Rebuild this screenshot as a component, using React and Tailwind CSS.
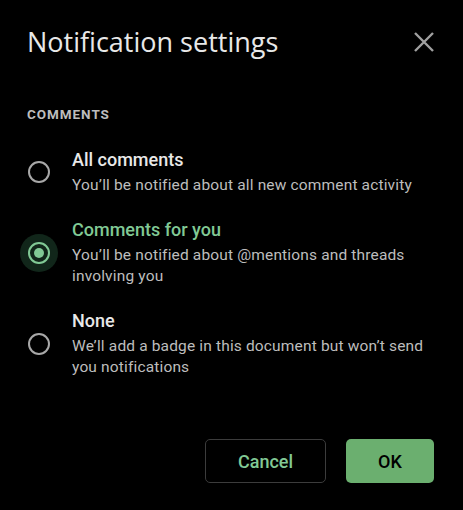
import { useState } from 'react';

const options = [
  {
    id: 'all',
    title: 'All comments',
    desc: 'You’ll be notified about all new comment activity',
  },
  {
    id: 'you',
    title: 'Comments for you',
    desc: 'You’ll be notified about @mentions and threads involving you',
  },
  {
    id: 'none',
    title: 'None',
    desc: 'We’ll add a badge in this document but won’t send you notifications',
  },
];

function Radio({ checked }) {
  return (
    <div
      className={`flex shrink-0 items-center justify-center w-[38px] h-[38px] rounded-full ${
        checked ? 'bg-[#11261a]' : ''
      }`}
    >
      <div
        className={`flex items-center justify-center w-[22px] h-[22px] rounded-full border-2 ${
          checked ? 'border-[#81c995]' : 'border-[#a8a8a8]'
        }`}
      >
        {checked && <div className="w-[10px] h-[10px] rounded-full bg-[#81c995]" />}
      </div>
    </div>
  );
}

export default function App() {
  const [value, setValue] = useState('you');

  return (
    <div
      className="w-[463px] h-[510px] bg-black flex flex-col"
      style={{ fontFamily: 'Roboto, "Noto Sans", sans-serif' }}
    >
      <div className="flex items-center justify-between pl-[27px] pr-[27px] pt-[22px]">
        <h1
          className="text-[27px] leading-[40px] text-[#e8e8e8]"
          style={{ fontFamily: '"Open Sans", Roboto, sans-serif' }}
        >
          Notification settings
        </h1>
        <button className="text-[#a0a0a0]">
          <svg width="24" height="24" viewBox="0 0 24 24" fill="none" stroke="currentColor" strokeWidth="2.4">
            <path d="M3 3 L21 21 M21 3 L3 21" />
          </svg>
        </button>
      </div>

      <div className="pl-[27px] mt-[44px] text-[13.5px] leading-[16px] font-bold tracking-[0.07em] text-[#bdbdbd]">
        COMMENTS
      </div>

      <div className="flex flex-col gap-[22px] pl-[20px] pr-[20px] mt-[26px]">
        {options.map((o) => {
          const checked = value === o.id;
          return (
            <div
              key={o.id}
              className="flex items-center gap-[14px] cursor-pointer"
              onClick={() => setValue(o.id)}
            >
              <Radio checked={checked} />
              <div className="flex flex-col">
                <div
                  className={`text-[18px] leading-[24px] font-medium ${
                    checked ? 'text-[#81c995]' : 'text-[#e8e8e8]'
                  }`}
                >
                  {o.title}
                </div>
                <div className="mt-[3px] text-[15.5px] leading-[21px] tracking-[0.01em] text-[#bdbdbd] max-w-[355px]">
                  {o.desc}
                </div>
              </div>
            </div>
          );
        })}
      </div>

      <div className="flex justify-end gap-[20px] pr-[29px] mt-auto mb-[27px]">
        <button className="w-[121px] h-[44px] rounded-[5px] border border-[#3c3c3c] text-[18px] font-medium text-[#81c995]">
          Cancel
        </button>
        <button className="w-[88px] h-[44px] rounded-[5px] bg-[#6baf6f] text-[18px] font-medium text-black">
          OK
        </button>
      </div>
    </div>
  );
}
